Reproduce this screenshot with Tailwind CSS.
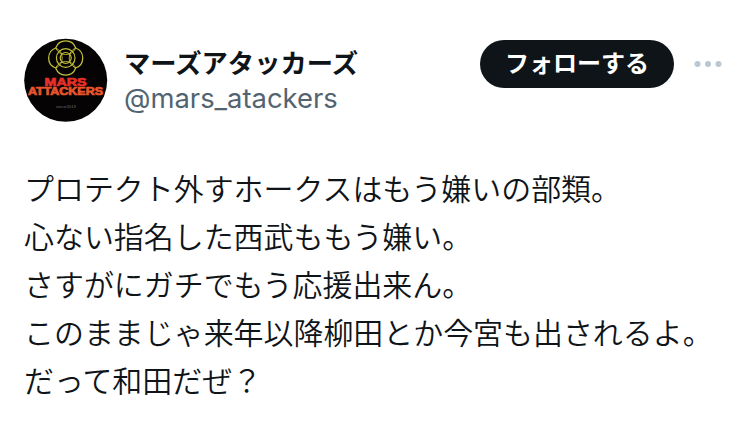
<!DOCTYPE html>
<html lang="ja">
<head>
    <meta charset="UTF-8">
    <meta name="viewport" content="width=device-width, initial-scale=1.0">
    <title>Post</title>
    <script src="https://cdn.jsdelivr.net/npm/@tailwindcss/browser@4"></script>
</head>
<body class="bg-white text-[#0f1419] font-['Inter','Noto_Sans_CJK_JP',sans-serif] overflow-hidden">
    <article class="pl-6 pr-7 pt-[38px]">
        <header class="flex items-start">
            <!-- Avatar -->
            <svg class="w-[84px] h-[84px] shrink-0" viewBox="0 0 84 84">
                <circle cx="41.7" cy="42.3" r="41.5" fill="#050303"/>
                <!-- Four petals around two rings -->
                <g transform="translate(41.7 20)" fill="none" stroke="#c4c03c" stroke-width="1.2">
                    <path d="M-8-8A8.5 8.5 0 0 1 8-8A8.5 8.5 0 0 1 8 8A8.5 8.5 0 0 1-8 8A8.5 8.5 0 0 1-8-8Z" transform="scale(1.25)" stroke-width="1"/>
                    <path d="M-10-10Q-7-3.5 0-3.5Q7-3.5 10-10M-10 10Q-7 3.5 0 3.5Q7 3.5 10 10M-10-10Q-3.5-7-3.5 0Q-3.5 7-10 10M10-10Q3.5-7 3.5 0Q3.5 7 10 10" stroke-width="0.9"/>
                    <circle r="9.3"/>
                    <circle r="5.5"/>
                </g>
                <g font-family="Liberation Sans" font-weight="bold" stroke-width="0.7">
                    <text x="20.5" y="47.7" font-size="11" textLength="42" lengthAdjust="spacingAndGlyphs" fill="#e6302a" stroke="#e6302a">MARS</text>
                    <text x="4" y="57.2" font-size="10" textLength="75" lengthAdjust="spacingAndGlyphs" fill="#e8552c" stroke="#e8552c">ATTACKERS</text>
                </g>
                <text x="42" y="70" font-size="4" fill="#777" text-anchor="middle" font-family="Liberation Sans" textLength="20">since2019</text>
            </svg>
            <div class="ml-4 pt-2">
                <h1 class="text-[26.3px] leading-[35px] font-bold whitespace-nowrap">マーズアタッカーズ</h1>
                <p class="text-[27.4px] leading-[34px] text-[#536471]">@mars_atackers</p>
            </div>
            <button class="ml-auto mt-0.5 w-[194px] h-12 rounded-full bg-[#0f1419] text-white text-2xl font-bold">フォローする</button>
            <svg class="ml-5 mt-[22px] w-7 h-2" viewBox="0 0 28 8" fill="#b9c8d3">
                <circle cx="3.5" cy="4" r="3"/>
                <circle cx="14" cy="4" r="3"/>
                <circle cx="24.5" cy="4" r="3"/>
            </svg>
        </header>
        <div class="mt-[43px] text-[29.95px] leading-[48px] font-[350] whitespace-nowrap">
            <p>プロテクト外すホークスはもう嫌いの部類。</p>
            <p>心ない指名した西武ももう嫌い。</p>
            <p>さすがにガチでもう応援出来ん。</p>
            <p>このままじゃ来年以降柳田とか今宮も出されるよ。</p>
            <p>だって和田だぜ？</p>
        </div>
    </article>
</body>
</html>
